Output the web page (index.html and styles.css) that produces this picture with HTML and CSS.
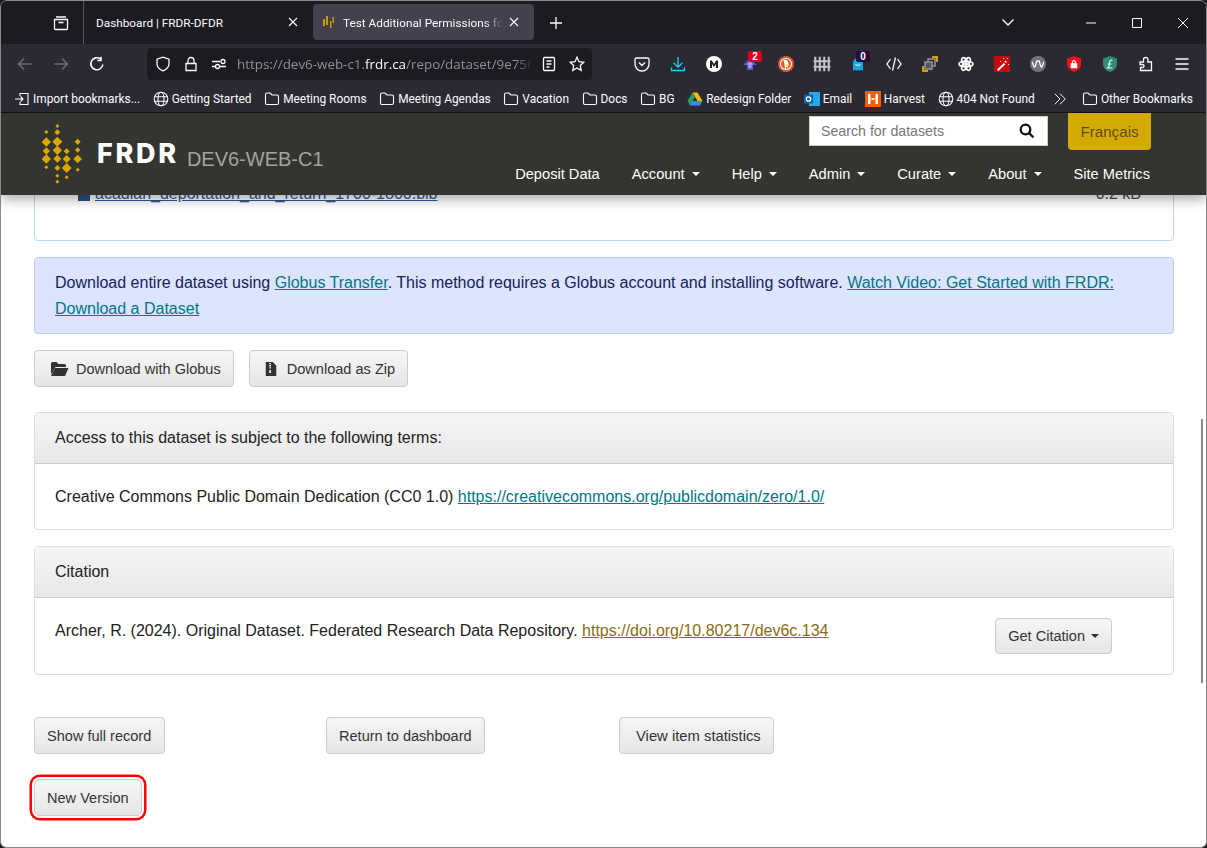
FILE: index.html
```html
<!DOCTYPE html>
<html>
<head>
	<meta charset="UTF-8">
	<title>Test Additional Permissions</title>
	<link rel="stylesheet" href="styles.css">
</head>
<body>
<svg class="defs" width="0" height="0">
	<symbol id="i-folder" viewBox="0 0 16 16"><path d="M1.5 3.5a1.5 1.5 0 0 1 1.5-1.5h3l2 2h5a1.5 1.5 0 0 1 1.5 1.5v6.500a1.500 1.500 0 0 1-1.500 1.500H3a1.500 1.500 0 0 1-1.500-1.500z"/></symbol>
	<symbol id="i-globe" viewBox="0 0 16 16"><circle cx="8" cy="8" r="6.800"/><ellipse cx="8" cy="8" rx="3" ry="6.800"/><path d="M1.500 5.700h13M1.500 10.300h13"/></symbol>
</svg>
<div class="window">
	<!-- browser tabs -->
	<div class="tabbar">
		<div class="tab-list">
			<svg class="ic" viewBox="0 0 16 16"><path d="M3 2h10M1.500 4.500h13v9a1 1 0 0 1-1 1h-11a1 1 0 0 1-1-1zM5.500 7.500h5"/></svg>
		</div>
		<div class="tab">
			<span class="tab-title">Dashboard | FRDR-DFDR</span>
			<svg class="tab-close" viewBox="0 0 12 12"><path d="M2 2l8 8M10 2l-8 8"/></svg>
		</div>
		<div class="tab tab-active">
			<svg class="tab-fav" viewBox="0 0 16 16"><path d="M3 5h2v7H3zM6 2h2v9H6zM10 7h1.500v7H10zM12.500 3H14v6h-1.500z"/></svg>
			<span class="tab-title tab-fade">Test Additional Permissions for</span>
			<svg class="tab-close" viewBox="0 0 12 12"><path d="M2 2l8 8M10 2l-8 8"/></svg>
		</div>
		<div class="tab-new">
			<svg class="ic" viewBox="0 0 16 16"><path d="M8 2v12M2 8h12"/></svg>
		</div>
		<div class="tab-space"></div>
		<div class="tab-chevron">
			<svg class="ic" viewBox="0 0 16 16"><path d="M2.500 5.500L8 11l5.500-5.500"/></svg>
		</div>
		<div class="caption"><svg class="cap-ic" viewBox="0 0 12 12"><path d="M1 6h10"/></svg></div>
		<div class="caption"><svg class="cap-ic" viewBox="0 0 12 12"><path d="M1.500 1.500h9v9h-9z"/></svg></div>
		<div class="caption"><svg class="cap-ic" viewBox="0 0 12 12"><path d="M1 1l10 10M11 1L1 11"/></svg></div>
	</div>

	<!-- address bar and extensions -->
	<div class="toolbar">
		<div class="slot slot-off"><svg class="ic" viewBox="0 0 16 16"><path d="M14.500 8h-13M7 2.500L1.500 8 7 13.500"/></svg></div>
		<div class="slot slot-off"><svg class="ic" viewBox="0 0 16 16"><path d="M1.500 8h13M9 2.500L14.500 8 9 13.500"/></svg></div>
		<div class="slot"><svg class="ic ic-bold" viewBox="0 0 16 16"><path d="M13.800 8.500A6 6 0 1 1 11.500 3M12 .8v3.700H8.300"/></svg></div>
		<div class="urlbar">
			<svg class="ic" viewBox="0 0 16 16"><path d="M8 1.200l6 2v4.300c0 3.500-2.500 6-6 7.300-3.500-1.300-6-3.800-6-7.300V3.200z"/></svg>
			<svg class="ic" viewBox="0 0 16 16"><path d="M3 7.500h10v7H3zM5 7.500V4.500a3 3 0 0 1 6 0v3"/></svg>
			<svg class="ic" viewBox="0 0 16 16"><path d="M1 5.500h8M1 10.500h3M9 10.500h6"/><circle cx="12" cy="5.500" r="2"/><circle cx="6.500" cy="10.500" r="2"/></svg>
			<span class="url">https://dev6-web-c1.<b>frdr.ca</b>/repo/dataset/9e756</span>
			<svg class="ic" viewBox="0 0 16 16"><path d="M3.500 1.500h9a1 1 0 0 1 1 1v11a1 1 0 0 1-1 1h-9a1 1 0 0 1-1-1v-11a1 1 0 0 1 1-1zM5.500 5h5M5.500 8h5M5.500 11h3"/></svg>
			<svg class="ic" viewBox="0 0 16 16"><path d="M8 1.300l2 4.400 4.800.6-3.500 3.300.9 4.800L8 12l-4.200 2.400.9-4.800L1.200 6.300 6 5.700z"/></svg>
		</div>
		<div class="extensions">
			<div class="slot"><svg class="ic" viewBox="0 0 16 16"><path d="M2.500 2h11A1.500 1.500 0 0 1 15 3.500V8a7 7 0 0 1-14 0V3.500A1.500 1.500 0 0 1 2.500 2zM5 6.500L8 9.500l3-3"/></svg></div>
			<div class="slot"><svg class="ic ic-cyan" viewBox="0 0 16 16"><path d="M8 1v10M3.500 6.800L8 11.200l4.500-4.400M1.500 11.500v3h13v-3"/></svg></div>
			<div class="slot"><svg class="ext" viewBox="0 0 16 16"><circle cx="8" cy="8" r="8" fill="#fff"/><path d="M4 12V4.500h1.800L8 8l2.200-3.500H12V12h-2V8L8 11 6 8v4z" fill="#222"/></svg></div>
			<div class="slot">
				<svg class="ext" viewBox="0 0 16 16"><path d="M8 2l7 7h-4v5H5V9H1z" fill="#5a57d6"/><path d="M8 5l3.500 3.500h-2V12h-3V8.500h-2z" fill="#a6a4f0"/></svg>
				<span class="badge badge-red">2</span>
			</div>
			<div class="slot"><svg class="ext" viewBox="0 0 16 16"><circle cx="8" cy="8" r="8" fill="#de5833"/><circle cx="8" cy="8" r="6" fill="#fff"/><circle cx="8" cy="8" r="5" fill="#de5833"/><path d="M5.500 4.500c2-1 4-.5 4.500 1.500l.5 3-1.500 4H7L6.500 8z" fill="#fff"/><path d="M8 8.500l3.500-1v1.500L8 10z" fill="#fc3"/><path d="M7.500 11h2l-.5 2H8z" fill="#6b3"/></svg></div>
			<div class="slot"><svg class="ic ic-fence" viewBox="0 0 16 16"><path d="M2 1.500v13M6 1.500v13M10 1.500v13M14 1.500v13M.5 5.500h15M.5 10.500h15"/></svg></div>
			<div class="slot">
				<svg class="ext" viewBox="0 0 16 16"><path d="M3 7a5 5 0 0 1 10 0v8l-2-1.500L9.500 15 8 13.500 6.500 15 5 13.500 3 15z" fill="#18a8ea"/><path d="M5.500 8.500c1 1 4 1 5 0" stroke="#fff" fill="none"/></svg>
				<span class="badge badge-dark">0</span>
			</div>
			<div class="slot"><svg class="ic" viewBox="0 0 16 16"><path d="M4.500 3L1 8l3.500 5M11.500 3L15 8l-3.500 5M9.500 1.500l-3 13"/></svg></div>
			<div class="slot"><svg class="ext" viewBox="0 0 16 16"><path d="M1 10v5h5M10 1h5v5" fill="none" stroke="#d79a00" stroke-width="2"/><rect x="3" y="6" width="7" height="7" fill="#54545c" stroke="#999" stroke-width="1.500"/><path d="M6 5V3h7v7h-2" fill="none" stroke="#999" stroke-width="1.500"/></svg></div>
			<div class="slot"><svg class="ic ic-bold" viewBox="0 0 16 16"><ellipse cx="8" cy="8" rx="7" ry="2.800"/><ellipse cx="8" cy="8" rx="7" ry="2.800" transform="rotate(60 8 8)"/><ellipse cx="8" cy="8" rx="7" ry="2.800" transform="rotate(120 8 8)"/><circle cx="8" cy="8" r="1.200" fill="#fff"/></svg></div>
			<div class="slot"><svg class="ext" viewBox="0 0 16 16"><rect width="16" height="16" fill="#c40a0a"/><path d="M3 13.500l7-6.500 1.300 1.300-6.800 6.700z" fill="#fff"/><path d="M10.500 5.500l1-1 1.500 1.500-1 1z" fill="#fff"/><path d="M9 2h1v1H9zM13 2h1v1h-1zM14 8h1v1h-1zM6 5h1v1H6z" fill="#fcc"/></svg></div>
			<div class="slot"><svg class="ext" viewBox="0 0 16 16"><circle cx="8" cy="8" r="8" fill="#757575"/><path d="M2 6c1 0 1 5 2.500 5S6 5 7 5h2c1 0 1 6 2.500 6S13 6 14 6" fill="none" stroke="#fff" stroke-width="1.300"/></svg></div>
			<div class="slot"><svg class="ext" viewBox="0 0 16 16"><path d="M8 0l7 2.500V8c0 4-3 6.500-7 8-4-1.500-7-4-7-8V2.500z" fill="#f00f1c"/><path d="M5 7.500h6V12H5zM6.300 7.500V6a1.700 1.700 0 0 1 3.400 0v1.500" fill="#fff" stroke="#fff" stroke-width=".6"/><path d="M7.200 7.200V6a.8.8 0 0 1 1.600 0v1.200z" fill="#f00f1c"/></svg></div>
			<div class="slot"><svg class="ext" viewBox="0 0 16 16"><path d="M8 0l7 2.500V8c0 4-3 6.500-7 8-4-1.500-7-4-7-8V2.500z" fill="#2e8b78"/><path d="M10.500 4.500C9 3.500 7.800 4.500 7.500 6.500L7 10.500c-.2 1-1 1-1.500 1.500h5M5.500 8h4" fill="none" stroke="#dff" stroke-width="1.200"/></svg></div>
			<div class="slot"><svg class="ic" viewBox="0 0 16 16"><path d="M2 6h3.500V3.500a2.200 2.200 0 0 1 4.400 0V6h3.600v8.500H2.500v-3H4.500a1.500 1.500 0 0 0 0-3H2z"/></svg></div>
			<div class="slot"><svg class="ic" viewBox="0 0 16 16"><path d="M1.500 3h13M1.500 8h13M1.500 13h13"/></svg></div>
		</div>
	</div>

	<!-- bookmarks -->
	<div class="bookmarks">
		<span class="bm"><svg class="ic-bm" viewBox="0 0 16 16"><path d="M6 5V2.500h8v11H6V11M1 8h8M6.500 5.500L9 8l-2.500 2.500"/></svg>Import bookmarks...</span>
		<span class="bm"><svg class="ic-bm"><use href="#i-globe"/></svg>Getting Started</span>
		<span class="bm"><svg class="ic-bm"><use href="#i-folder"/></svg>Meeting Rooms</span>
		<span class="bm"><svg class="ic-bm"><use href="#i-folder"/></svg>Meeting Agendas</span>
		<span class="bm"><svg class="ic-bm"><use href="#i-folder"/></svg>Vacation</span>
		<span class="bm"><svg class="ic-bm"><use href="#i-folder"/></svg>Docs</span>
		<span class="bm"><svg class="ic-bm"><use href="#i-folder"/></svg>BG</span>
		<span class="bm"><svg class="ext" viewBox="0 0 16 16"><path d="M5.500 1.500h5L15.500 10H10.500z" fill="#fbbc04"/><path d="M5.500 1.500L.5 10 3 14.500 8 6z" fill="#1fa463"/><path d="M3 14.500h10l2.500-4.500H5.500z" fill="#4285f4"/></svg>Redesign Folder</span>
		<span class="bm"><svg class="ext" viewBox="0 0 16 16"><rect x="5" y="1" width="11" height="14" fill="#28a8ea"/><rect x="0" y="3.500" width="9" height="9" fill="#0a64b0"/><circle cx="4.500" cy="8" r="2.200" fill="none" stroke="#fff" stroke-width="1.300"/></svg>Email</span>
		<span class="bm"><svg class="ext" viewBox="0 0 16 16"><rect width="16" height="16" fill="#fa5d00"/><path d="M3 3h2.500v10H3zM10.500 3H13v10h-2.500zM6.500 7h3v2h-3z" fill="#fff"/></svg>Harvest</span>
		<span class="bm"><svg class="ic-bm"><use href="#i-globe"/></svg>404 Not Found</span>
		<svg class="bm-more" viewBox="0 0 16 16"><path d="M2 2l6 6-6 6M8 2l6 6-6 6"/></svg>
		<span class="bm"><svg class="ic-bm"><use href="#i-folder"/></svg>Other Bookmarks</span>
	</div>

	<!-- the page -->
	<div class="page">
		<header class="site-head">
			<div class="brand">
				<svg class="logo" viewBox="0 0 300 210"><path fill="#dba800" d="M49 36l6 6-6 6-6-6zM49 58l14 14-14 14-14-14zM49 88l11 11-11 11-11-11zM49 109l14 14-14 14-14-14zM49 142l6 6-6 6-6-6zM82 18l6 6-6 6-6-6zM82 34l9 9-9 9-9-9zM82 56l15 15-15 15-15-15zM82 83l14 14-14 14-14-14zM82 110l12 12-12 12-12-12zM82 141l9 9-9 9-9-9zM82 167l6 6-6 6-6-6zM82 185l6 6-6 6-6-6zM110 91l9 9-9 9-9-9zM110 111l12 12-12 12-12-12zM110 135l15 15-15 15-15-15zM110 172l6 6-6 6-6-6zM143 62l9 9-9 9-9-9zM143 88l8 8-8 8-8-8zM143 110l13 13-13 13-13-13zM143 149l6 6-6 6-6-6z"/></svg>
				<span class="brand-name">FRDR</span>
				<span class="brand-env">DEV6-WEB-C1</span>
			</div>
			<div class="head-right">
				<div class="head-top">
					<div class="search">
						<span class="search-text">Search for datasets</span>
						<svg class="search-ic" viewBox="0 0 16 16"><circle cx="6.500" cy="6.500" r="4.800"/><path d="M10 10l4.500 4.500"/></svg>
					</div>
					<div class="lang">Français</div>
				</div>
				<nav class="nav">
					<a>Deposit Data</a>
					<a class="drop">Account</a>
					<a class="drop">Help</a>
					<a class="drop">Admin</a>
					<a class="drop">Curate</a>
					<a class="drop">About</a>
					<a>Site Metrics</a>
				</nav>
			</div>
		</header>

		<main class="main">
			<div class="files">
				<div class="file-row">
					<span class="file-name"><i class="file-ic"></i><a>acadian_deportation_and_return_1700-1800.bib</a></span>
					<span class="file-size">0.2 kB</span>
				</div>
			</div>

			<div class="alert">Download entire dataset using <a class="link">Globus Transfer</a>. This method requires a Globus account and installing software. <a class="link">Watch Video: Get Started with FRDR: Download a Dataset</a></div>

			<div class="btn-row">
				<a class="btn">
					<svg class="btn-ic" viewBox="0 0 18 14"><path d="M0 1.500A1.500 1.500 0 0 1 1.500 0h4l2 2h6A1.500 1.500 0 0 1 15 3.500V5H4.500L1 11.500H0z"/><path d="M4 6h13.500l-3.500 8H0z"/></svg>
					Download with Globus
				</a>
				<a class="btn">
					<svg class="btn-ic btn-ic-zip" viewBox="0 0 12 16"><path d="M0 0h8l4 4v12H0zM4 1v1.500h2V1zM4 3.500V5h2V3.500zM4 6v1.500h2V6zM4 9v3.500h2V9z" fill-rule="evenodd"/></svg>
					Download as Zip
				</a>
			</div>

			<section class="panel">
				<div class="panel-head">Access to this dataset is subject to the following terms:</div>
				<div class="panel-body">Creative Commons Public Domain Dedication (CC0 1.0) <a class="link">https://creativecommons.org/publicdomain/zero/1.0/</a></div>
			</section>

			<section class="panel">
				<div class="panel-head">Citation</div>
				<div class="panel-body panel-cite">
					<span>Archer, R. (2024). Original Dataset. Federated Research Data Repository. <a class="link-doi">https://doi.org/10.80217/dev6c.134</a></span>
					<a class="btn btn-cite">Get Citation<i class="caret"></i></a>
				</div>
			</section>

			<div class="actions">
				<div><a class="btn btn-show">Show full record</a></div>
				<div><a class="btn">Return to dashboard</a></div>
				<div><a class="btn btn-stats">View item statistics</a></div>
			</div>
			<a class="btn btn-ring">New Version</a>
		</main>
		<div class="scrollthumb"></div>
	</div>
</div>
</body>
</html>
```

FILE: styles.css
```css
*{
	box-sizing: border-box;
}
html,body{
	margin: 0;
	height: 100%;
	background: #1c1b22;
	overflow: hidden;
}
.defs{
	position: absolute;
}
.window{
	width: 1207px;
	height: 848px;
	display: flex;
	flex-direction: column;
	overflow: hidden;
	border: 1px solid #8a8a8a;
	border-radius: 7px 7px 6px 6px;
	font-family: Roboto, "Open Sans", sans-serif;
	color: #fbfbfe;
}
.ic{
	width: 16px;
	height: 16px;
	flex: none;
	fill: none;
	stroke: currentColor;
	stroke-width: 1.300;
}
.ic-bold{
	stroke-width: 1.600;
}
.ic-cyan{
	color: #00ddff;
}
.ic-fence{
	width: 18px;
	height: 18px;
	color: #c4c4c4;
	stroke-width: 1.800;
}
.ext{
	width: 16px;
	height: 16px;
	flex: none;
}

/* tab bar */
.tabbar{
	height: 43px;
	flex: none;
	display: flex;
	background: #1c1b22;
	font-size: 11.800px;
}
.tab-list{
	width: 83px;
	height: 43px;
	padding: 14px 0 0 52px;
	border-right: 1px solid #55545c;
}
.tab{
	width: 229px;
	height: 36px;
	margin-top: 3px;
	padding: 0 12px;
	display: flex;
	align-items: center;
}
.tab-title{
	flex: 1;
	padding-top: 1px;
	white-space: nowrap;
	overflow: hidden;
}
.tab-close{
	width: 12px;
	height: 12px;
	flex: none;
	margin-right: 2px;
	fill: none;
	stroke: #fbfbfe;
	stroke-width: 1.100;
}
.tab-active{
	width: 221px;
	background: #42414d;
	border-radius: 4px;
}
.tab-fav{
	width: 16px;
	height: 16px;
	flex: none;
	margin: 0 7px 0 -5px;
	fill: #c99a05;
}
.tab-fade{
	-webkit-mask-image: linear-gradient(to right, #000 88%, transparent);
	mask-image: linear-gradient(to right, #000 88%, transparent);
	margin-right: 5px;
}
.tab-new{
	width: 36px;
	margin-left: 4px;
	padding-top: 14px;
	text-align: center;
}
.tab-space{
	flex: 1;
}
.tab-chevron{
	width: 36px;
	margin-right: 42px;
	padding-top: 13px;
	text-align: center;
}
.caption{
	width: 46px;
	padding-top: 16px;
	text-align: center;
}
.cap-ic{
	width: 12px;
	height: 12px;
	fill: none;
	stroke: #fbfbfe;
	stroke-width: 1;
}

/* address bar */
.toolbar{
	height: 40px;
	flex: none;
	display: flex;
	align-items: center;
	padding-left: 6px;
	background: #2b2a33;
}
.slot{
	position: relative;
	width: 36px;
	height: 32px;
	flex: none;
	display: flex;
	align-items: center;
	justify-content: center;
}
.slot-off{
	color: #6f6e75;
}
.urlbar{
	width: 445px;
	height: 32px;
	margin: 0 32px;
	padding: 0 7px 0 8px;
	display: flex;
	align-items: center;
	gap: 12px;
	background: #1c1b22;
	border-radius: 4px;
}
.url{
	flex: 1;
	margin: 0 -4px 0 -2px;
	font-family: "Open Sans", sans-serif;
	font-size: 13.400px;
	color: #8f8f9d;
	white-space: nowrap;
	overflow: hidden;
	-webkit-mask-image: linear-gradient(to right, #000 94%, transparent);
	mask-image: linear-gradient(to right, #000 94%, transparent);
}
.url b{
	font-weight: normal;
	color: #fbfbfe;
}
.extensions{
	display: flex;
}
.badge{
	position: absolute;
	top: 3px;
	left: 16px;
	min-width: 14px;
	height: 11px;
	padding: 0 2px;
	border-radius: 2px;
	font: bold 10px/11px "Liberation Sans", sans-serif;
	text-align: center;
	color: #fff;
}
.badge-red{
	background: #d70022;
}
.badge-dark{
	background: #2b0a3d;
}

/* bookmarks */
.bookmarks{
	height: 29px;
	flex: none;
	display: flex;
	align-items: center;
	gap: 12.600px;
	padding: 1px 0 0 13px;
	background: #2b2a33;
	border-bottom: 1px solid #111;
	font-size: 11.900px;
}
.bm{
	display: flex;
	align-items: center;
	gap: 3px;
	white-space: nowrap;
}
.ic-bm{
	width: 16px;
	height: 16px;
	flex: none;
	fill: none;
	stroke: #fbfbfe;
	stroke-width: 1.100;
}
.bm-more{
	width: 14px;
	height: 14px;
	flex: none;
	margin: 0 2px 0 6px;
	fill: none;
	stroke: #fbfbfe;
	stroke-width: 1.100;
}

/* site */
.page{
	position: relative;
	flex: 1;
	background: #fff;
	font-family: "Liberation Sans", Arial, sans-serif;
	font-size: 16px;
	line-height: 26px;
	color: #333;
	overflow: hidden;
}
.site-head{
	position: relative;
	z-index: 5;
	height: 82px;
	display: flex;
	justify-content: space-between;
	background: #343430;
	box-shadow: 0 4px 12px rgba(0,0,0,0.35);
}
.brand{
	display: flex;
	align-items: center;
	padding: 10px 0 0 29px;
	height: 70px;
}
.logo{
	width: 100px;
	height: 70px;
	margin-top: -1px;
	margin-right: -33px;
	flex: none;
}
.brand-name{
	font-family: Inter, "Open Sans", sans-serif;
	font-weight: 800;
	font-size: 27px;
	letter-spacing: 2.700px;
	color: #fff;
	margin-top: 1px;
}
.brand-env{
	margin: 12px 0 0 8px;
	font-size: 20px;
	color: #a3a3a3;
}
.head-right{
	display: flex;
	flex-direction: column;
	align-items: flex-end;
	padding-right: 55px;
}
.head-top{
	display: flex;
	gap: 20px;
	height: 37px;
}
.search{
	width: 239px;
	height: 30px;
	margin-top: 3px;
	padding: 0 12px 0 11px;
	display: flex;
	align-items: center;
	justify-content: space-between;
	background: #fff;
	border: 1px solid #ccc;
	color: #777;
	font-size: 14.200px;
}
.search-ic{
	width: 16px;
	height: 16px;
	fill: none;
	stroke: #111;
	stroke-width: 2.300;
}
.lang{
	width: 83px;
	height: 37px;
	line-height: 37px;
	text-align: center;
	background: #d4aa00;
	color: #5f4c17;
	border-radius: 0 0 4px 4px;
	font-size: 15.200px;
}
.nav{
	display: flex;
	gap: 32px;
	margin: 12px 1px 0 0;
	color: #fff;
	line-height: 24px;
	font-size: 14.650px;
}
.drop::after{
	content: "";
	display: inline-block;
	margin-left: 7px;
	vertical-align: 3px;
	border-top: 4px solid #fff;
	border-left: 4px solid transparent;
	border-right: 4px solid transparent;
}
.main{
	margin-top: -45px;
	padding: 0 32px 0 33px;
}
.files{
	height: 91px;
	padding: 30px 32px 0 43px;
	background: #fff;
	border: 1px solid #b5d8f7;
	border-radius: 0 0 4px 4px;
}
.file-row{
	display: flex;
	justify-content: space-between;
	color: #444;
}
.file-name a{
	color: #2a5a9a;
	text-decoration: underline;
}
.file-ic{
	display: inline-block;
	width: 12px;
	height: 14px;
	margin-right: 5px;
	vertical-align: -2px;
	background: #2a5080;
}
.alert{
	margin-top: 16px;
	padding: 12px 20px 11px;
	background: #dce5fd;
	border: 1px solid #bfcbe2;
	border-radius: 4px;
	color: #14235a;
}
.link{
	color: #007786;
	text-decoration: underline;
}
.link-doi{
	color: #8a6d14;
	text-decoration: underline;
}
.btn-row{
	display: flex;
	gap: 15px;
	margin-top: 16px;
}
.btn{
	display: inline-flex;
	align-items: center;
	height: 37px;
	padding: 0 12px;
	background: linear-gradient(#f6f6f6, #e6e6e6);
	border: 1px solid #ccc;
	border-radius: 4px;
	color: #333;
	font-size: 14.550px;
	white-space: nowrap;
}
.btn-ic{
	width: 18px;
	height: 14px;
	margin: 0 7px 0 4px;
	fill: #333;
}
.btn-ic-zip{
	width: 12px;
	margin: 0 10px 0 3px;
}
.btn-show{
	padding-right: 13px;
}
.btn-stats{
	padding-left: 16px;
	font-size: 14.800px;
}
.panel{
	margin-top: 16px;
	border: 1px solid #ddd;
	border-radius: 4px;
}
.btn-row + .panel{
	margin-top: 25px;
}
.panel-head{
	height: 51px;
	padding: 12px 20px;
	background: linear-gradient(#f5f5f5, #e8e8e8);
	border-bottom: 1px solid #ccc;
	color: #222;
}
.panel-body{
	padding: 20px 20px 19px;
	color: #222;
}
.panel-cite{
	display: flex;
	justify-content: space-between;
	padding: 20px 61px 20px 20px;
	height: 76px;
}
.btn-cite{
	height: 36px;
}
.caret{
	margin-left: 6px;
	border-top: 4px solid #333;
	border-left: 4px solid transparent;
	border-right: 4px solid transparent;
}
.actions{
	display: grid;
	grid-template-columns: 292px 293px auto;
	margin-top: 42px;
}
.btn-ring{
	margin-top: 25px;
	box-shadow: 0 0 0 2px #fff, 0 0 0 4.500px #f00;
	border-radius: 6px;
}
.scrollthumb{
	position: absolute;
	z-index: 6;
	left: 1200px;
	top: 306px;
	width: 2px;
	height: 264px;
	background: #8a8a8a;
}
```
